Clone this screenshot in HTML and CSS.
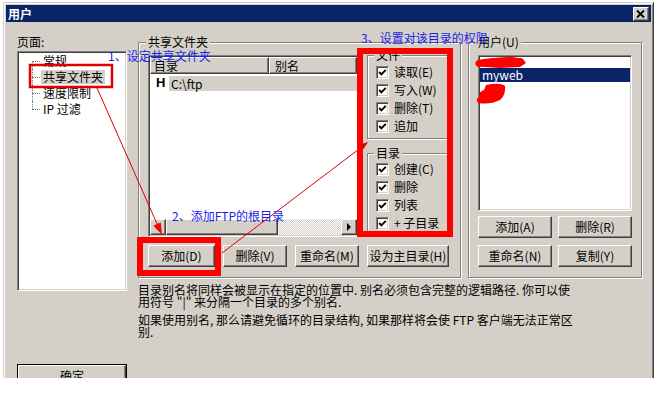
FILE: index.html
```html
<!DOCTYPE html>
<html lang="zh-CN">
<head>
<meta charset="utf-8">
<title>用户</title>
<link rel="stylesheet" href="styles.css">
</head>
<body>
<div class="page">
  <div class="window">
    <div class="titlebar">
      <span class="title">用户</span>
      <span class="close raised" aria-label="关闭">
        <svg width="14" height="12" viewBox="0 0 14 12"><path d="M3 2.5 L10 9.5 M10 2.5 L3 9.5" stroke="#000" stroke-width="1.8" fill="none"/></svg>
      </span>
    </div>
    <div class="client">
      <div class="nav">
        <div class="label">页面:</div>
        <div class="tree sunken">
          <ul>
            <li><span>常规</span></li>
            <li class="sel"><span>共享文件夹</span></li>
            <li><span>速度限制</span></li>
            <li><span>IP 过滤</span></li>
          </ul>
        </div>
        <div class="btn default"><span class="btn-in">确定</span></div>
      </div>
      <div class="main">
        <div class="groups">
          <fieldset class="group shared">
            <legend>共享文件夹</legend>
            <div class="shared-grid">
              <div class="listview sunken">
                <div class="lv-head">
                  <span class="col c1">目录</span>
                  <span class="col c2">别名</span>
                </div>
                <div class="lv-body">
                  <div class="lv-row"><span class="home">H</span><span class="path">C:\ftp</span></div>
                </div>
                <div class="hscroll">
                  <span class="sb-btn left"></span>
                  <span class="sb-thumb"></span>
                  <span class="sb-track"></span>
                  <span class="sb-btn right"></span>
                </div>
              </div>
              <div class="perms">
                <fieldset class="group sub">
                  <legend>文件</legend>
                  <div class="chk"><span class="box"><svg width="9" height="9" viewBox="0 0 9 9"><path d="M1.2 4 L3.4 6.4 L7.8 1.8" stroke="#000" stroke-width="1.9" fill="none"/></svg></span>读取(E)</div>
                  <div class="chk"><span class="box"><svg width="9" height="9" viewBox="0 0 9 9"><path d="M1.2 4 L3.4 6.4 L7.8 1.8" stroke="#000" stroke-width="1.9" fill="none"/></svg></span>写入(W)</div>
                  <div class="chk"><span class="box"><svg width="9" height="9" viewBox="0 0 9 9"><path d="M1.2 4 L3.4 6.4 L7.8 1.8" stroke="#000" stroke-width="1.9" fill="none"/></svg></span>删除(T)</div>
                  <div class="chk"><span class="box"><svg width="9" height="9" viewBox="0 0 9 9"><path d="M1.2 4 L3.4 6.4 L7.8 1.8" stroke="#000" stroke-width="1.9" fill="none"/></svg></span>追加</div>
                </fieldset>
                <fieldset class="group sub dir">
                  <legend>目录</legend>
                  <div class="chk"><span class="box"><svg width="9" height="9" viewBox="0 0 9 9"><path d="M1.2 4 L3.4 6.4 L7.8 1.8" stroke="#000" stroke-width="1.9" fill="none"/></svg></span>创建(C)</div>
                  <div class="chk"><span class="box"><svg width="9" height="9" viewBox="0 0 9 9"><path d="M1.2 4 L3.4 6.4 L7.8 1.8" stroke="#000" stroke-width="1.9" fill="none"/></svg></span>删除</div>
                  <div class="chk"><span class="box"><svg width="9" height="9" viewBox="0 0 9 9"><path d="M1.2 4 L3.4 6.4 L7.8 1.8" stroke="#000" stroke-width="1.9" fill="none"/></svg></span>列表</div>
                  <div class="chk"><span class="box"><svg width="9" height="9" viewBox="0 0 9 9"><path d="M1.2 4 L3.4 6.4 L7.8 1.8" stroke="#000" stroke-width="1.9" fill="none"/></svg></span>+ 子目录</div>
                </fieldset>
              </div>
              <div class="btn-row">
                <div class="btn w-add">添加(D)</div>
                <div class="btn w-del">删除(V)</div>
                <div class="btn w-ren">重命名(M)</div>
              </div>
              <div class="btn">设为主目录(H)</div>
            </div>
          </fieldset>
          <fieldset class="group users">
            <legend>用户(U)</legend>
            <div class="userlist sunken">
              <div class="item first">&nbsp;</div>
              <div class="item sel">myweb</div>
              <div class="item">&nbsp;</div>
            </div>
            <div class="user-btns">
              <div class="btn">添加(A)</div>
              <div class="btn">删除(R)</div>
              <div class="btn">重命名(N)</div>
              <div class="btn">复制(Y)</div>
            </div>
          </fieldset>
        </div>
        <div class="notes">
          <p>目录别名将同样会被显示在指定的位置中. 别名必须包含完整的逻辑路径. 你可以使<br>用符号 "|" 来分隔一个目录的多个别名.</p>
          <p>如果使用别名, 那么请避免循环的目录结构, 如果那样将会使 FTP 客户端无法正常区<br>别.</p>
        </div>
      </div>
    </div>
  </div>

  <svg class="annot" width="659" height="393" viewBox="0 0 659 393">
    <rect x="30" y="65" width="82" height="22" fill="none" stroke="#e00000" stroke-width="2.5"/>
    <rect x="360" y="51" width="90" height="183" fill="none" stroke="#ff0000" stroke-width="6"/>
    <rect x="140" y="240" width="78" height="33" fill="none" stroke="#ff0000" stroke-width="6"/>
    <line x1="97" y1="88" x2="158" y2="226" stroke="#e00000" stroke-width="1"/>
    <polygon points="162,235 153.5,225.6 160.8,222.4" fill="#ff0000"/>
    <line x1="222" y1="253" x2="363" y2="146" stroke="#e00000" stroke-width="1"/>
    <polygon points="368,142 363.4,149.2 359.8,144.4" fill="#e00000"/>
    <path d="M479 63.5 Q495 60 520 61.5" stroke="#ff0000" stroke-width="7" stroke-linecap="round" fill="none"/>
    <path d="M476 64 L480 60 L495 58 L512 57 L523 59 L526 63 L520 67 L500 68 L485 67 L476 66 Z" fill="#ff0000"/>
    <path d="M486 85 Q500 82 505 86 Q506 95 500 100 Q490 105 478 103 Q475 99 480 96 Q478 92 484 90 Z" fill="#ff0000"/>
  </svg>
  <span class="tip t1">1、设定共享文件夹</span>
  <span class="tip t2">2、添加FTP的根目录</span>
  <span class="tip t3">3、设置对该目录的权限</span>
</div>
</body>
</html>
```
FILE: styles.css
```css
* { box-sizing: border-box; }
html, body { margin: 0; padding: 0; background: #fff; }
body {
  font-family: "Noto Sans CJK SC", "Noto Sans", sans-serif;
  font-size: 12px;
  line-height: 12px;
  color: #000;
}
.page { position: relative; width: 659px; height: 393px; overflow: hidden; }

.window {
  margin: 2px 0 0 3px;
  width: 651px;
  height: 376px;
  background: #d4d0c8;
  border: 1px solid;
  border-color: #d4d0c8 #404040 transparent #d4d0c8;
  border-bottom: 0;
  padding: 2px 2px 0;
  box-shadow: inset 1px 1px #fff, inset -1px 0 #808080;
  display: flex;
  flex-direction: column;
  overflow: hidden;
}
.titlebar {
  height: 17px;
  flex: none;
  background: #0a246a;
  display: flex;
  align-items: center;
  justify-content: space-between;
  padding: 0 2px;
}
.title { color: #fff; font-weight: bold; font-size: 12px; line-height: 12px; }
.close {
  width: 16px; height: 14px;
  display: flex; align-items: center; justify-content: center;
}
.raised, .btn, .sb-btn, .sb-thumb, .col {
  background: #d4d0c8;
  border: 1px solid;
  border-color: #fff #404040 #404040 #fff;
  box-shadow: inset -1px -1px #808080;
}
.sunken {
  background: #fff;
  border: 1px solid;
  border-color: #808080 #fff #fff #808080;
  box-shadow: inset 1px 1px #404040, inset -1px -1px #d4d0c8;
  padding: 1px;
}

.client {
  flex: 1;
  display: flex;
  padding: 14px 0 0 11px;
}
.nav { width: 110px; flex: none; display: flex; flex-direction: column; }
.label { height: 12px; margin-bottom: 3px; }
.tree { height: 240px; flex: none; }
.tree ul { list-style: none; margin: 0; padding: 0; }
.tree li { position: relative; height: 16px; padding-left: 22px; display: flex; align-items: center; }
.tree li span { padding: 0 2px; line-height: 14px; height: 14px; }
.tree li.sel span { background: #d4d0c8; }
.tree li::before {
  content: ""; position: absolute; left: 13px; width: 8px; top: 8px;
  border-top: 1px dotted #808080;
}
.tree li::after {
  content: ""; position: absolute; left: 13px; top: 0; bottom: 0;
  border-left: 1px dotted #808080;
}
.tree li:first-child::after { top: 8px; }
.tree li:last-child::after { bottom: 8px; }

.btn {
  height: 22px;
  display: flex; align-items: center; justify-content: center;
  white-space: nowrap;
}
.btn.default {
  margin-top: 73px;
  height: 23px;
  border: 1px solid #000;
  box-shadow: none;
  padding: 0;
  flex: none;
}
.btn-in {
  flex: 1; align-self: stretch;
  display: flex; align-items: center; justify-content: center;
  border: 1px solid; border-color: #fff #404040 #404040 #fff;
  box-shadow: inset -1px -1px #808080;
}

.main { margin-left: 11px; width: 504px; flex: none; }
.groups { display: flex; gap: 7px; align-items: flex-start; }

fieldset.group {
  margin: 0;
  min-width: 0;
  border: 1px solid #808080;
  box-shadow: inset 1px 1px #fff, 1px 1px #fff;
}
fieldset.group legend {
  padding: 0 2px;
  margin-left: -2px;
  background: #d4d0c8;
  font-size: 12px;
  line-height: 12px;
}
.shared { width: 323px; padding: 7px 11px 10px 9px; }
.users { width: 174px; padding: 7px 9px 10px 9px; }

.shared-grid {
  display: grid;
  grid-template-columns: 211px 82px;
  grid-template-rows: 182px 22px;
  column-gap: 8px;
  row-gap: 8px;
}
.listview { display: flex; flex-direction: column; }
.lv-head { height: 17px; display: flex; flex: none; }
.col { display: flex; align-items: center; line-height: 12px; }
.c1 { width: 119px; padding-left: 3px; }
.c2 { flex: 1; padding-left: 5px; }
.lv-body { flex: 1; padding-top: 1px; }
.lv-row { height: 16px; display: flex; align-items: center; }
.home { width: 19px; padding-left: 6px; font-weight: bold; font-size: 13px; font-family: "Liberation Sans", sans-serif; }
.path { flex: 1; background: #d4d0c8; height: 15px; line-height: 15px; padding-left: 2px; }
.hscroll { height: 16px; display: flex; flex: none; }
.sb-btn { width: 16px; flex: none; position: relative; }
.sb-btn::before {
  content: ""; position: absolute; top: 3px; left: 4px;
  border-top: 4px solid transparent; border-bottom: 4px solid transparent;
}
.sb-btn.left::before { border-right: 4px solid #000; }
.sb-btn.right::before { left: 5px; border-left: 4px solid #000; }
.sb-thumb { width: 112px; flex: none; }
.sb-track {
  flex: 1;
  background: repeating-conic-gradient(#fff 0 25%, #d4d0c8 0 50%) 0 0 / 2px 2px;
}

.perms { margin-top: -6px; display: flex; flex-direction: column; }
fieldset.sub { width: 82px; padding: 2px 7px 3px 8px; }
fieldset.sub.dir { margin-top: 8px; padding: 1px 7px 0 8px; }
.chk { height: 18px; display: flex; align-items: center; gap: 5px; white-space: nowrap; }
.box {
  width: 13px; height: 13px; flex: none;
  background: #fff;
  border: 1px solid; border-color: #808080 #fff #fff #808080;
  box-shadow: inset 1px 1px #404040, inset -1px -1px #d4d0c8;
  display: flex; align-items: center; justify-content: center;
}
.btn-row { display: flex; gap: 8px; }
.w-add { width: 67px; }
.w-del { width: 64px; }
.w-ren { width: 64px; }

.userlist { height: 156px; margin-bottom: 5px; }
.item { height: 14px; line-height: 14px; padding-left: 2px; }
.item.first { height: 11px; }
.item.sel { background: #0a246a; color: #fff; }
.user-btns {
  display: grid;
  grid-template-columns: 74px 74px;
  grid-template-rows: 22px 22px;
  column-gap: 6px;
  row-gap: 7px;
}

.notes { margin-top: 6px; }
.notes p { margin: 0 0 6px; white-space: nowrap; }

.annot { position: absolute; left: 0; top: 0; pointer-events: none; }
.tip {
  position: absolute;
  color: #1e1ee6;
  font-size: 12px;
  line-height: 12px;
  white-space: nowrap;
}
.t1 { left: 108px; top: 50px; }
.t2 { left: 172px; top: 210px; }
.t3 { left: 361px; top: 32px; }
```
